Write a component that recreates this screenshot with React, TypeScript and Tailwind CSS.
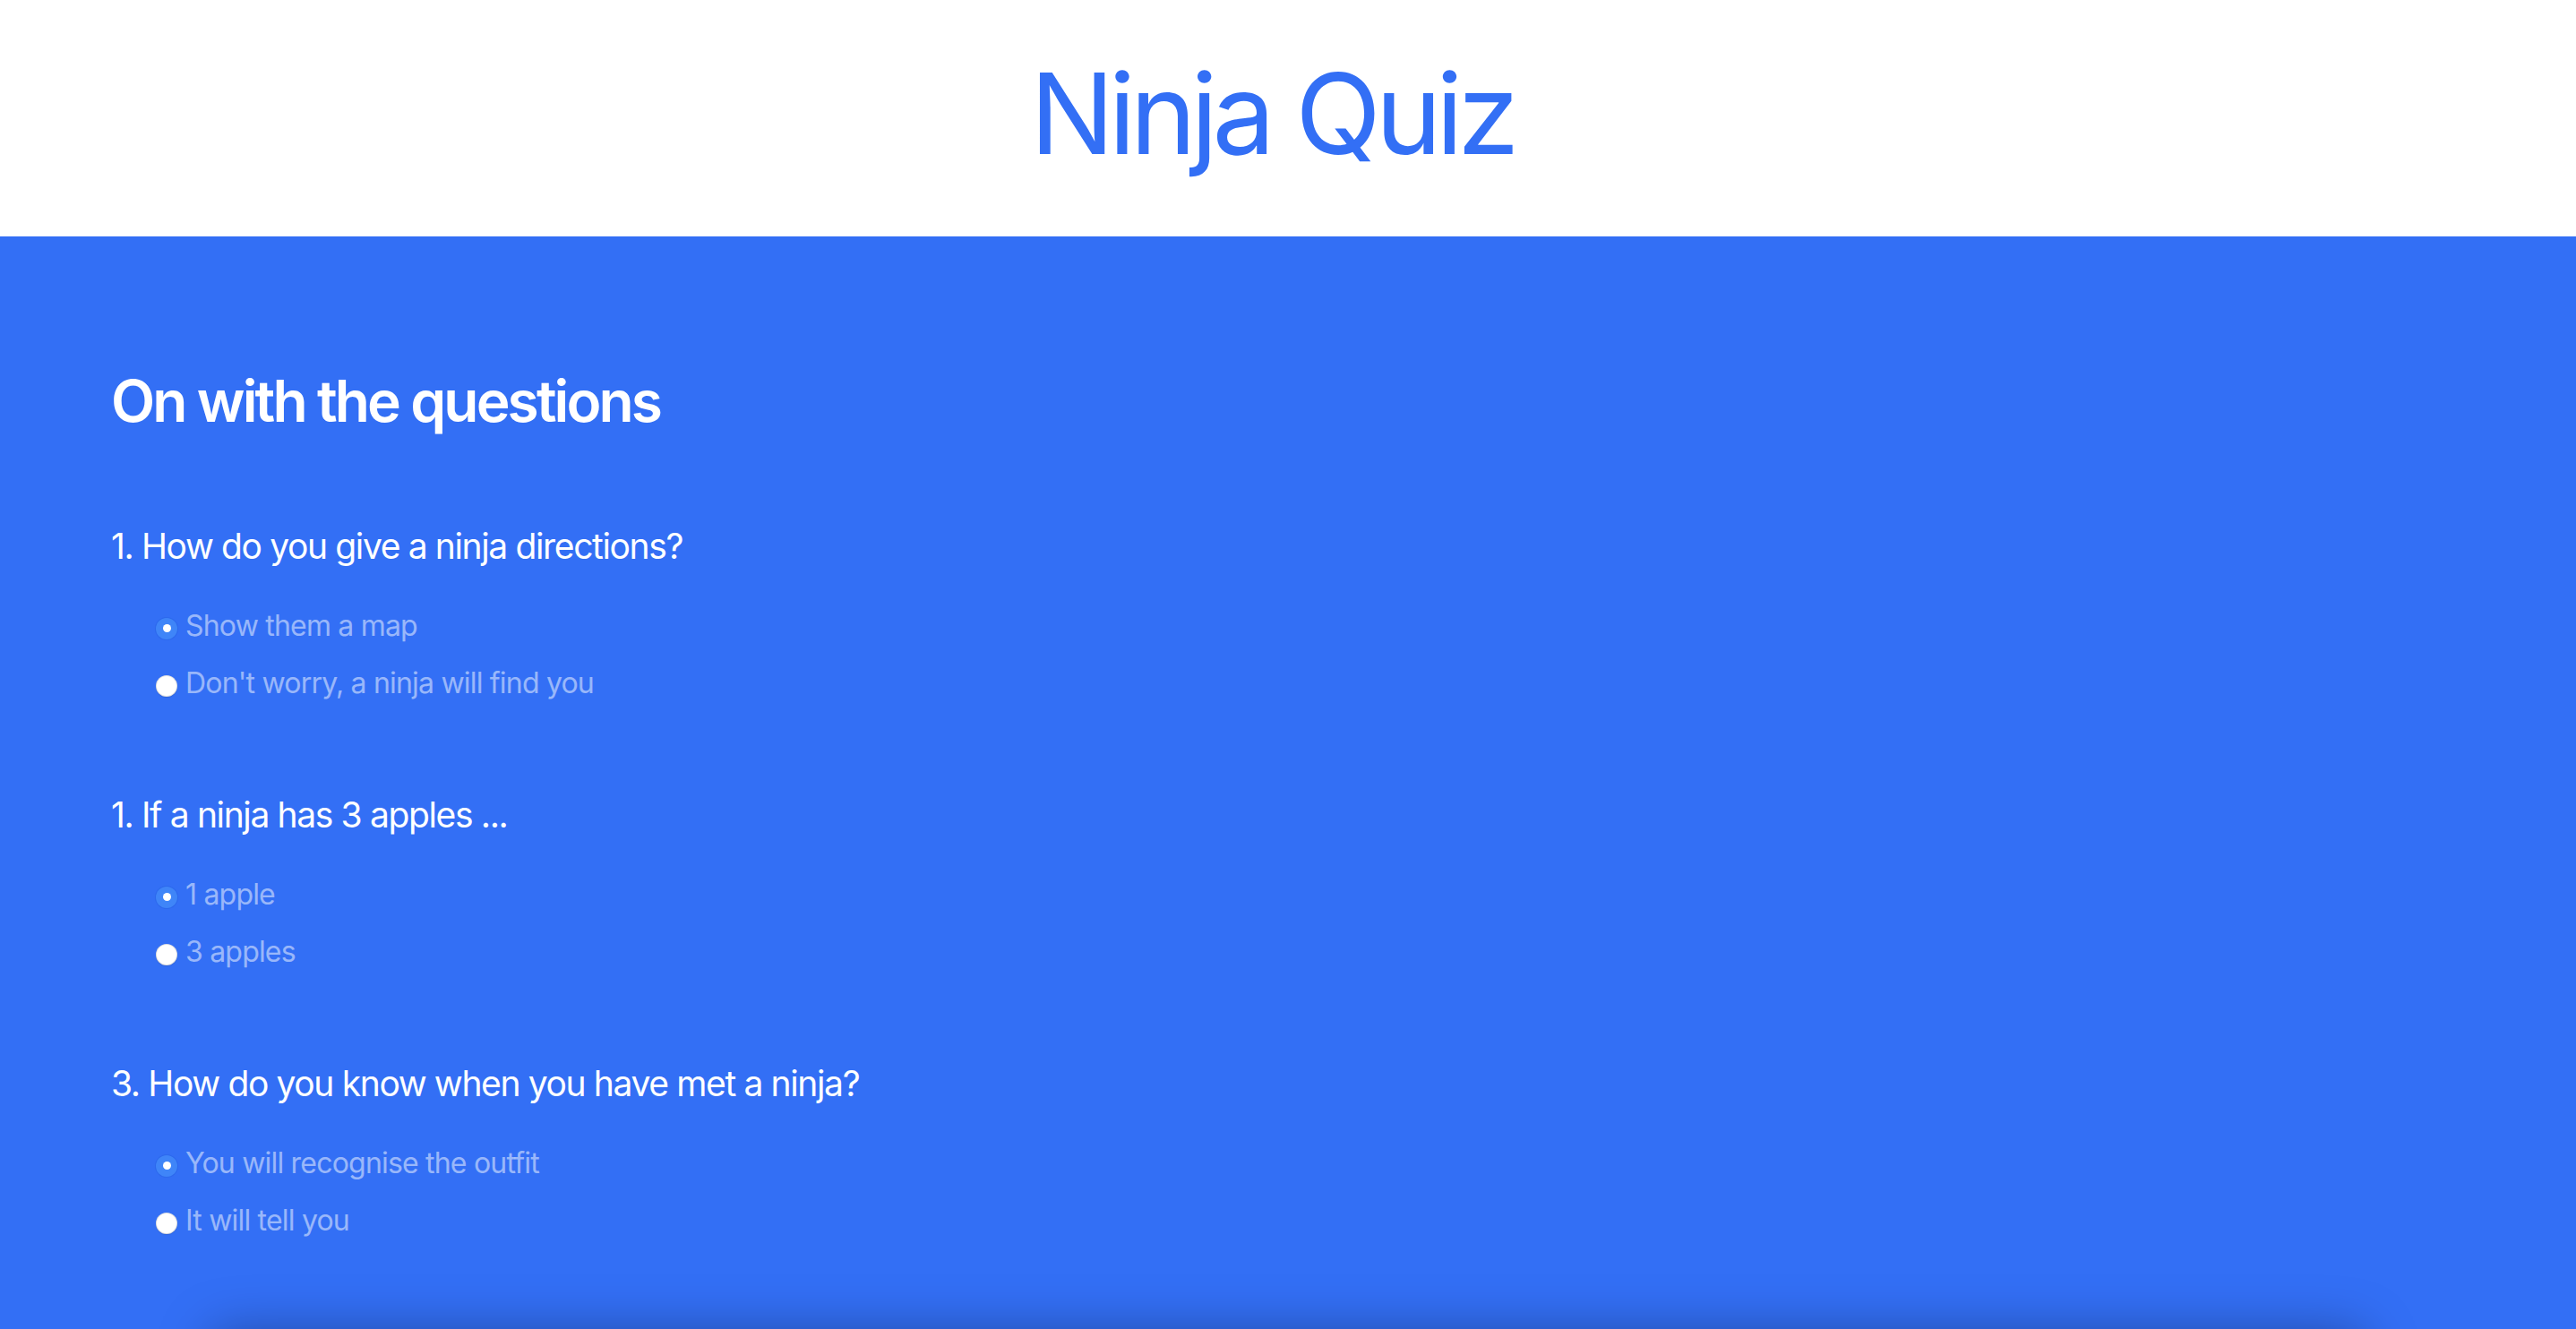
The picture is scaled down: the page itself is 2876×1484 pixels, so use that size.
import React from "react";

const questions = [
  {
    q: "1. How do you give a ninja directions?",
    options: ["Show them a map", "Don't worry, a ninja will find you"],
  },
  {
    q: "1. If a ninja has 3 apples ...",
    options: ["1 apple", "3 apples"],
  },
  {
    q: "3. How do you know when you have met a ninja?",
    options: ["You will recognise the outfit", "It will tell you"],
  },
];

function Radio({ checked }: { checked: boolean }) {
  if (checked) {
    return (
      <span className="flex h-[24px] w-[24px] shrink-0 items-center justify-center rounded-full bg-[#3f85f8] shadow-[0_0_0_1px_rgba(40,100,230,0.6)]">
        <span className="block h-[9px] w-[9px] rounded-full bg-white" />
      </span>
    );
  }
  return (
    <span className="block h-[24px] w-[24px] shrink-0 rounded-full bg-white shadow-[inset_0_0_0_1px_rgba(0,0,0,0.12),0_1px_1px_rgba(0,0,0,0.1)]" />
  );
}

export default function App() {
  return (
    <div
      className="min-h-screen bg-[#336ff5]"
      style={{ fontFamily: "Inter, 'Noto Sans', sans-serif" }}
    >
      <header className="flex h-[264px] items-center justify-center bg-white pb-[11px] pr-[36px]">
        <h1 className="text-[125px] font-normal leading-none tracking-[-0.05em] text-[#336ff5]">
          Ninja Quiz
        </h1>
      </header>
      <main className="bg-[#336ff5] px-[124px] pt-[152px] text-white">
        <h2 className="text-[64px] font-semibold leading-none tracking-[-0.045em]">
          On with the questions
        </h2>
        <div className="mt-[110px] flex flex-col gap-[111px]">
          {questions.map((item, qi) => (
            <div key={qi}>
              <p className="text-[39px] font-normal leading-none tracking-[-0.035em]">
                {item.q}
              </p>
              <div className="mt-[54px] flex flex-col gap-[32px] pl-[50px]">
                {item.options.map((opt, oi) => (
                  <label
                    key={oi}
                    className="flex items-center gap-[9px] text-[32px] leading-none tracking-[-0.025em] text-white/50"
                  >
                    <span className="mt-[5px] block">
                      <Radio checked={oi === 0} />
                    </span>
                    <span>{opt}</span>
                  </label>
                ))}
              </div>
            </div>
          ))}
        </div>
        <div className="mx-auto mt-[120px] h-[300px] max-w-[2400px] rounded-[8px] bg-white shadow-[0_-10px_60px_rgba(0,0,0,0.35)]" />
        <div className="h-[100px]" />
      </main>
    </div>
  );
}
